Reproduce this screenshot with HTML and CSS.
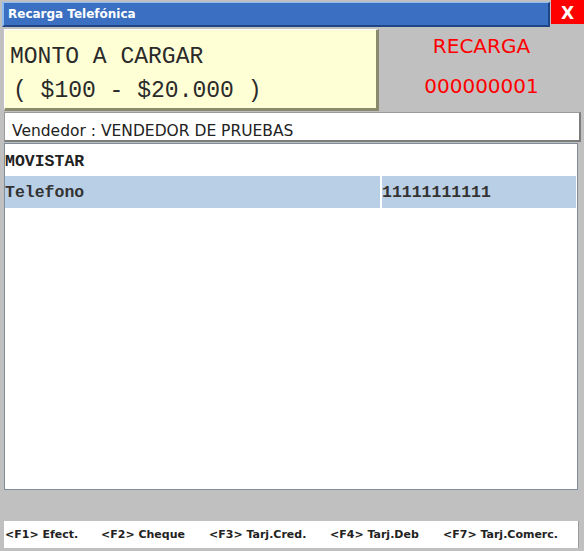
FILE: index.html
```html
<!DOCTYPE html>
<html>
<head>
<meta charset="utf-8">
<link rel="stylesheet" href="styles.css">
</head>
<body>
<div class="window">
  <div class="titlebar">
    <div class="title">Recarga Telefónica</div>
    <div class="close">X</div>
  </div>
  <div class="top">
    <div class="amount">
      <div class="amount-line">MONTO A CARGAR</div>
      <div class="amount-line range">( $100 - $20.000 )</div>
    </div>
    <div class="recarga">
      <div class="recarga-line">RECARGA</div>
      <div class="recarga-line">000000001</div>
    </div>
  </div>
  <div class="seller">Vendedor : VENDEDOR DE PRUEBAS</div>
  <div class="grid">
    <div class="row plain"><div class="cell">MOVISTAR</div></div>
    <div class="row selected"><div class="cell">Telefono</div><div class="cell">11111111111</div></div>
  </div>
  <div class="keys">
    <span class="key">&lt;F1&gt; Efect.</span>
    <span class="key">&lt;F2&gt; Cheque</span>
    <span class="key">&lt;F3&gt; Tarj.Cred.</span>
    <span class="key">&lt;F4&gt; Tarj.Deb</span>
    <span class="key">&lt;F7&gt; Tarj.Comerc.</span>
  </div>
</div>
</body>
</html>
```
FILE: styles.css
```css
html, body {
  margin: 0;
  padding: 0;
  background: #c0c0c0;
}
.window {
  width: 584px;
  height: 551px;
  background: #c0c0c0;
  display: flex;
  flex-direction: column;
}
.titlebar {
  display: flex;
  height: 27px;
  align-items: flex-start;
}
.title {
  box-sizing: border-box;
  margin: 2px 0 0 2px;
  width: 548px;
  height: 25px;
  background: #3a6fc1;
  border-top: 1px solid #8cbcf2;
  border-left: 2px solid #8cbcf2;
  border-bottom: 2px solid #1f4584;
  border-right: 2px solid #1f4584;
  color: #fff;
  font: bold 12px "DejaVu Sans", sans-serif;
  line-height: 22px;
  padding-left: 4px;
}
.close {
  margin-left: 1px;
  width: 33px;
  height: 24px;
  background: #ff0000;
  color: #fff;
  font: bold 17px "DejaVu Sans", sans-serif;
  line-height: 26px;
  text-align: center;
}
.top {
  display: flex;
  margin-top: 2px;
  height: 82px;
}
.amount {
  box-sizing: border-box;
  margin-left: 4px;
  width: 375px;
  height: 82px;
  background: #ffffd6;
  border-top: 1px solid #ffffff;
  border-left: 1px solid #ffffff;
  border-right: 3px solid #8a8a6c;
  border-bottom: 3px solid #8a8a6c;
  padding: 10px 0 0 5px;
  font: 23px "Liberation Mono", monospace;
  color: #2a2a2a;
}
.amount-line {
  height: 34px;
  line-height: 34px;
  white-space: pre;
}
.amount-line.range {
  padding-left: 3px;
}
.recarga {
  flex: 1;
  display: flex;
  flex-direction: column;
  align-items: center;
  padding-top: 2px;
  color: #ff0000;
  font: 20px "DejaVu Sans", sans-serif;
}
.recarga-line {
  height: 41px;
  line-height: 30px;
}
.seller {
  box-sizing: border-box;
  margin: 1px 0 0 4px;
  width: 577px;
  height: 30px;
  background: #fff;
  border-top: 1px solid #9a9a9a;
  border-left: 1px solid #9a9a9a;
  border-right: 2px solid #7c7c7c;
  border-bottom: 2px solid #7c7c7c;
  padding: 6px 0 0 7px;
  font: 15.5px "DejaVu Sans", sans-serif;
  line-height: 24px;
  color: #222;
}
.grid {
  box-sizing: border-box;
  margin: 1px 0 0 4px;
  width: 574px;
  height: 347px;
  background: #fff;
  border: 1px solid #7f8c9c;
  padding: 1px 0 0 0;
}
.row {
  display: grid;
  grid-template-columns: 375px 194px;
  grid-template-rows: 100%;
  column-gap: 2px;
  width: 571px;
  font: bold 16.5px "Liberation Mono", monospace;
}
.row.plain {
  height: 31px;
  color: #222;
}
.row.plain .cell {
  padding-top: 3px;
  line-height: 28px;
}
.row.selected {
  height: 32px;
  color: #333;
}
.row.selected .cell {
  background: #b9cfe6;
  padding-top: 2px;
  line-height: 30px;
}
.cell {
  box-sizing: border-box;
  white-space: pre;
  overflow: hidden;
}
.keys {
  box-sizing: border-box;
  margin: 31px 0 0 4px;
  width: 575px;
  height: 27px;
  background: #fff;
  border-right: 1px solid #9a9a9a;
  display: grid;
  grid-template-columns: 96px 108px 121px 113px auto;
  padding-left: 1px;
  font: bold 11px "DejaVu Sans", sans-serif;
  line-height: 27px;
  color: #222;
}
```
